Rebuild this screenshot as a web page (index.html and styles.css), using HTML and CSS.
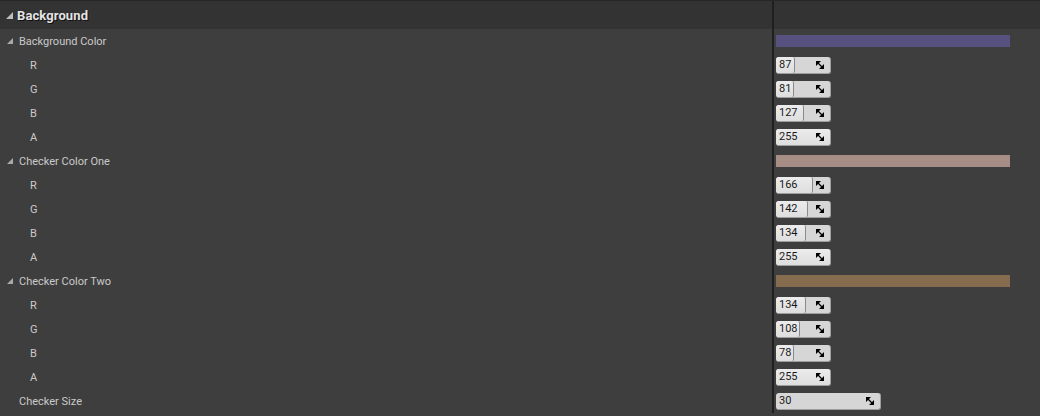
FILE: index.html
```html
<!DOCTYPE html>
<html>
<head>
<meta charset="utf-8">
<link rel="stylesheet" href="styles.css">
</head>
<body>
<div class="panel">
  <div class="row header">
    <div class="name"><span class="tri"></span><span class="htext">Background</span></div>
    <div class="sep"></div>
    <div class="val"></div>
  </div>

  <div class="row">
    <div class="name group"><span class="tri"></span>Background Color</div>
    <div class="sep"></div>
    <div class="val"><div class="swatch" style="background: rgb(87,81,127)"></div></div>
  </div>
  <div class="row"><div class="name child">R</div><div class="sep"></div><div class="val"><div class="spin"><div class="fill" style="width:18px"></div><span class="num">87</span><svg class="ico" viewBox="0 0 8 8"><path d="M0 0H5L0 5Z M8 8H3L8 3Z" fill="#000"/><path d="M1 1L7 7" stroke="#000" stroke-width="1.3"/></svg></div></div></div>
  <div class="row"><div class="name child">G</div><div class="sep"></div><div class="val"><div class="spin"><div class="fill" style="width:17px"></div><span class="num">81</span><svg class="ico" viewBox="0 0 8 8"><path d="M0 0H5L0 5Z M8 8H3L8 3Z" fill="#000"/><path d="M1 1L7 7" stroke="#000" stroke-width="1.3"/></svg></div></div></div>
  <div class="row"><div class="name child">B</div><div class="sep"></div><div class="val"><div class="spin"><div class="fill" style="width:27px"></div><span class="num">127</span><svg class="ico" viewBox="0 0 8 8"><path d="M0 0H5L0 5Z M8 8H3L8 3Z" fill="#000"/><path d="M1 1L7 7" stroke="#000" stroke-width="1.3"/></svg></div></div></div>
  <div class="row"><div class="name child">A</div><div class="sep"></div><div class="val"><div class="spin"><div class="fill full" style="width:55px"></div><span class="num">255</span><svg class="ico" viewBox="0 0 8 8"><path d="M0 0H5L0 5Z M8 8H3L8 3Z" fill="#000"/><path d="M1 1L7 7" stroke="#000" stroke-width="1.3"/></svg></div></div></div>

  <div class="row">
    <div class="name group"><span class="tri"></span>Checker Color One</div>
    <div class="sep"></div>
    <div class="val"><div class="swatch" style="background: rgb(166,142,134)"></div></div>
  </div>
  <div class="row"><div class="name child">R</div><div class="sep"></div><div class="val"><div class="spin"><div class="fill" style="width:36px"></div><span class="num">166</span><svg class="ico" viewBox="0 0 8 8"><path d="M0 0H5L0 5Z M8 8H3L8 3Z" fill="#000"/><path d="M1 1L7 7" stroke="#000" stroke-width="1.3"/></svg></div></div></div>
  <div class="row"><div class="name child">G</div><div class="sep"></div><div class="val"><div class="spin"><div class="fill" style="width:31px"></div><span class="num">142</span><svg class="ico" viewBox="0 0 8 8"><path d="M0 0H5L0 5Z M8 8H3L8 3Z" fill="#000"/><path d="M1 1L7 7" stroke="#000" stroke-width="1.3"/></svg></div></div></div>
  <div class="row"><div class="name child">B</div><div class="sep"></div><div class="val"><div class="spin"><div class="fill" style="width:29px"></div><span class="num">134</span><svg class="ico" viewBox="0 0 8 8"><path d="M0 0H5L0 5Z M8 8H3L8 3Z" fill="#000"/><path d="M1 1L7 7" stroke="#000" stroke-width="1.3"/></svg></div></div></div>
  <div class="row"><div class="name child">A</div><div class="sep"></div><div class="val"><div class="spin"><div class="fill full" style="width:55px"></div><span class="num">255</span><svg class="ico" viewBox="0 0 8 8"><path d="M0 0H5L0 5Z M8 8H3L8 3Z" fill="#000"/><path d="M1 1L7 7" stroke="#000" stroke-width="1.3"/></svg></div></div></div>

  <div class="row">
    <div class="name group"><span class="tri"></span>Checker Color Two</div>
    <div class="sep"></div>
    <div class="val"><div class="swatch" style="background: rgb(134,108,78)"></div></div>
  </div>
  <div class="row"><div class="name child">R</div><div class="sep"></div><div class="val"><div class="spin"><div class="fill" style="width:29px"></div><span class="num">134</span><svg class="ico" viewBox="0 0 8 8"><path d="M0 0H5L0 5Z M8 8H3L8 3Z" fill="#000"/><path d="M1 1L7 7" stroke="#000" stroke-width="1.3"/></svg></div></div></div>
  <div class="row"><div class="name child">G</div><div class="sep"></div><div class="val"><div class="spin"><div class="fill" style="width:23px"></div><span class="num">108</span><svg class="ico" viewBox="0 0 8 8"><path d="M0 0H5L0 5Z M8 8H3L8 3Z" fill="#000"/><path d="M1 1L7 7" stroke="#000" stroke-width="1.3"/></svg></div></div></div>
  <div class="row"><div class="name child">B</div><div class="sep"></div><div class="val"><div class="spin"><div class="fill" style="width:17px"></div><span class="num">78</span><svg class="ico" viewBox="0 0 8 8"><path d="M0 0H5L0 5Z M8 8H3L8 3Z" fill="#000"/><path d="M1 1L7 7" stroke="#000" stroke-width="1.3"/></svg></div></div></div>
  <div class="row"><div class="name child">A</div><div class="sep"></div><div class="val"><div class="spin"><div class="fill full" style="width:55px"></div><span class="num">255</span><svg class="ico" viewBox="0 0 8 8"><path d="M0 0H5L0 5Z M8 8H3L8 3Z" fill="#000"/><path d="M1 1L7 7" stroke="#000" stroke-width="1.3"/></svg></div></div></div>

  <div class="row">
    <div class="name group">Checker Size</div>
    <div class="sep"></div>
    <div class="val"><div class="spin wide"><span class="num">30</span><svg class="ico" viewBox="0 0 8 8"><path d="M0 0H5L0 5Z M8 8H3L8 3Z" fill="#000"/><path d="M1 1L7 7" stroke="#000" stroke-width="1.3"/></svg></div></div>
  </div>
</div>
</body>
</html>
```

FILE: styles.css
```css
* { box-sizing: border-box; }
html, body {
  margin: 0;
  padding: 0;
  background: #3e3e3e;
  font-family: Roboto, "Noto Sans", "Liberation Sans", sans-serif;
  overflow: hidden;
}
.panel {
  width: 1040px;
  height: 416px;
  display: flex;
  flex-direction: column;
  background: #3e3e3e;
  border-top: 1px solid #262626;
}
.row {
  display: grid;
  grid-template-columns: 772px 2px 1fr;
  height: 24px;
  flex: none;
}
.row.header {
  height: 28px;
  background: #333333;
}
.sep {
  background: #1f1f1f;
}
.name {
  display: flex;
  align-items: center;
  font-size: 11px;
  color: #cacaca;
  white-space: nowrap;
}
.header .name {
  padding-left: 6px;
}
.htext {
  font-size: 13px;
  font-weight: bold;
  color: #e4e4e4;
  text-shadow: 1px 1px 0 #111;
  margin-left: 4px;
  letter-spacing: 0.1px;
}
.group {
  padding-left: 19px;
  position: relative;
}
.group .tri {
  position: absolute;
  left: 7px;
  top: 9px;
}
.tri {
  display: inline-block;
  width: 0;
  height: 0;
  border-left: 6px solid transparent;
  border-bottom: 6px solid #a9a9a9;
}
.header .tri {
  border-left-width: 7px;
  border-bottom-width: 7px;
  border-bottom-color: #bdbdbd;
}
.child {
  padding-left: 30px;
}
.val {
  display: flex;
  align-items: center;
  padding-left: 2px;
}
.swatch {
  width: 234px;
  height: 12px;
}
.spin {
  position: relative;
  width: 55px;
  height: 17px;
  background: #d6d6d6;
  border-radius: 3px;
  border-right: 1px solid #9e9e9e;
  border-bottom: 1px solid #9e9e9e;
  display: flex;
  align-items: center;
}
.spin.wide {
  width: 105px;
}
.fill {
  position: absolute;
  left: 0;
  top: 0;
  bottom: 0;
  background: linear-gradient(#ececec, #dedede);
  border-radius: 3px 2px 2px 3px;
  box-shadow: 1px 0 0 #8a8a8a;
}
.fill.full {
  box-shadow: none;
  border-radius: 3px;
  width: 100% !important;
}
.num {
  position: relative;
  font-size: 11px;
  color: #1a1a1a;
  padding-left: 3px;
}
.ico {
  position: absolute;
  right: 6px;
  top: 4px;
  width: 8px;
  height: 8px;
}
```
